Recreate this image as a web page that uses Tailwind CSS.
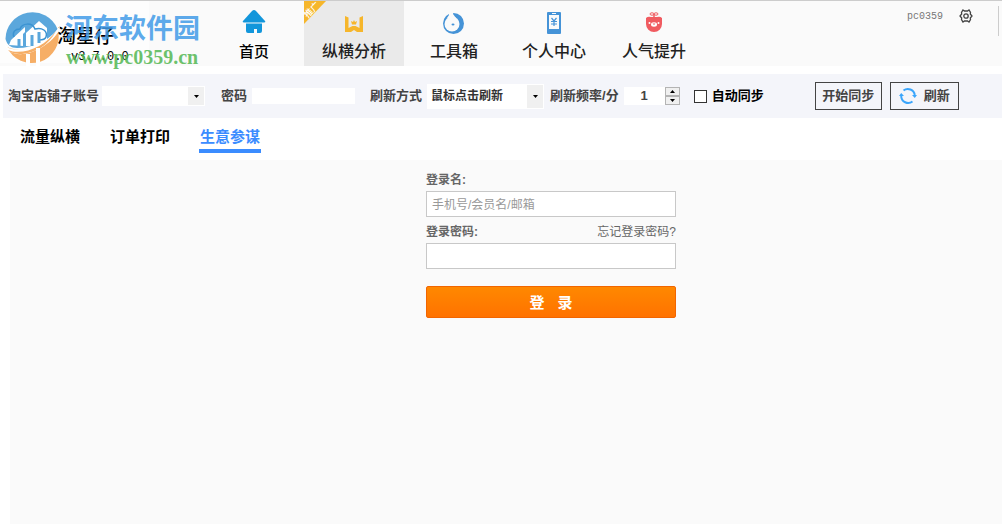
<!DOCTYPE html>
<html lang="zh-CN">
<head>
<meta charset="utf-8">
<meta name="viewport" content="width=device-width, initial-scale=1">
<title>淘星仔</title>
<script src="https://cdn.jsdelivr.net/npm/@tailwindcss/browser@4"></script>
</head>
<body class="flex min-h-screen flex-col bg-white font-['Liberation_Sans','Noto_Sans_CJK_SC',sans-serif] text-[#444]">
<header class="flex h-[66px] shrink-0 border-t border-[#ccc] bg-[#fafafa]">
  <div class="relative w-[204px] shrink-0">
    <div class="h-[62px] w-[149px] bg-[#fdfdfd]"></div>
    <h1 class="absolute top-6 left-[57px] text-[19px] leading-6 font-medium text-black">淘星仔</h1>
    <p class="absolute top-12 left-[71px] font-['Liberation_Mono',monospace] text-xs leading-4 text-black">v3.7.0.0</p>
    <svg class="absolute top-[8px] left-[4px]" width="58" height="58" viewBox="0 0 58 58" aria-hidden="true">
      <path d="M1.500 30a27 27 0 0 1 52-10C46 31 30 39 13 39 7 39 3 36 1.500 30Z" fill="#5ba7dc"/>
      <path d="M3 38c8 4 22 4 33-2 10-5 16-10 18-15a27 27 0 0 1-51 17Z" fill="#f6ae66"/>
      <path d="M5 36 7 31 21 18v5l-2 2v12Z" fill="#fff"/>
      <path d="M22 37V24l13-12 8 7v13c-6 4-14 6-21 5Z" fill="#fff"/>
      <path d="M10 28c-2-5 1-8 6-8 2-6 12-7 15 0 7-2 13 2 11 8-1 3-4 3-7 3" fill="none" stroke="#3b93d2" stroke-width="1.500"/>
      <path d="M15 30v7M28 26v11M35 23v11" fill="none" stroke="#5ba7dc" stroke-width="3"/>
      <path d="M0 34c3 6 9 7 16 6 16-1 32-10 40-23 0 10-20 26-36 28C9 46 2 42 0 34Z" fill="#fff"/>
      <path d="M4 41c14 6 37-3 48-19-7 14-21 22-34 23-7 0-11-1-14-4Z" fill="#f6ae66"/>
      <path d="M22 45h4v12h-4zM32 39h4v18h-4z" fill="#fff"/>
    </svg>
    <p class="absolute top-[10px] left-[65px] font-['Noto_Sans_CJK_SC',sans-serif] text-[27px] leading-8 font-bold whitespace-nowrap text-[#419be8]/85">河东软件园</p>
    <p class="absolute top-[44px] left-[66px] font-['Liberation_Serif',serif] text-xl leading-6 font-bold text-[#52b752]/85">www.pc0359.cn</p>
  </div>
  <nav class="flex text-center text-base leading-6 font-medium text-[#222]">
    <a href="#" class="flex w-[100px] flex-col items-center gap-1 pt-[9px] text-black">
      <svg width="26" height="26" viewBox="0 0 26 26" fill="#1296db" aria-hidden="true"><path d="M2 11 11 1q2-2 4 0l9 10q1 1.500-1 1.500H3q-2 0-1-1.500Z"/><path d="M5 13.500h16V21q0 2-2 2h-3v-4h-3v4H7q-2 0-2-2Z"/></svg>
      <span class="text-[15px]">首页</span>
    </a>
    <a href="#" class="relative flex w-[100px] flex-col items-center gap-1 bg-[#eaeaea] pt-[9px]">
      <svg class="absolute top-0 left-0" width="23" height="23" viewBox="0 0 23 23" aria-hidden="true"><path d="M0 0h22L0 23Z" fill="#f6b62b"/></svg>
      <span class="absolute top-[3px] -left-px -rotate-45 text-[9px] leading-3 whitespace-nowrap text-white">推广</span>
      <svg width="26" height="26" viewBox="0 0 26 26" aria-hidden="true"><path d="m4 6 3.500 1.500V18l4-2h3l4 2V7.500L22 6v16h-6l-3-2-3 2H4Z" fill="#f6b62b"/><path d="m10 11 2 1 1-2 1 2 2-1-1 3.500h-4Z" fill="#f6b62b"/></svg>
      <span>纵横分析</span>
    </a>
    <a href="#" class="flex w-[100px] flex-col items-center gap-1 pt-[9px]">
      <svg width="26" height="26" viewBox="0 0 26 26" aria-hidden="true"><circle cx="12.500" cy="13.500" r="10.500" fill="#4593d7"/><circle cx="11" cy="14" r="7.500" fill="#fafafa"/><path d="M8 0h5l-1 4 3 4-4 3-5-3 2-3Z" fill="#fafafa"/><ellipse cx="12" cy="14.500" rx="1.500" ry="1" fill="#4593d7"/></svg>
      <span>工具箱</span>
    </a>
    <a href="#" class="flex w-[100px] flex-col items-center gap-1 pt-[9px]">
      <svg width="26" height="26" viewBox="0 0 26 26" aria-hidden="true"><rect x="6" y="2" width="14" height="22" rx="1" fill="#4593d7"/><path d="M8 5h10v14H8z" fill="#fafafa"/><path d="M11 3.500h4" stroke="#fafafa"/><path d="m10.500 8 2.500 3 2.500-3M10 11.500h6M10 14h6M13 11v5" fill="none" stroke="#4593d7" stroke-width="1.200"/></svg>
      <span>个人中心</span>
    </a>
    <a href="#" class="flex w-[100px] flex-col items-center gap-1 pt-[9px]">
      <svg width="26" height="26" viewBox="0 0 26 26" aria-hidden="true"><path d="M5 8q2-2 5-1h6q3-1 5 1v6a8 8 0 0 1-16 0Z" fill="#f05b60"/><path d="M13 7V4" stroke="#f05b60" stroke-width="1.500"/><ellipse cx="11" cy="4" rx="2" ry="1.200" fill="none" stroke="#f05b60"/><ellipse cx="15" cy="4" rx="2" ry="1.200" fill="none" stroke="#f05b60"/><ellipse cx="13" cy="14.500" rx="3" ry="2.200" fill="#fff"/><circle cx="8.500" cy="13" r="1" fill="#fff"/><circle cx="17.500" cy="13" r="1" fill="#fff"/><path d="M11.500 13.500h3L13 15Z" fill="#f05b60"/></svg>
      <span>人气提升</span>
    </a>
  </nav>
  <div class="ml-auto flex items-start pt-[5px] pr-[3px]">
    <span class="mr-4 pt-[3px] font-['Liberation_Mono',monospace] text-[10px] leading-4 text-[#777]">pc0359</span>
    <button type="button" aria-label="设置" class="mt-[3px] mr-[25px]">
      <svg width="14" height="14" viewBox="0 0 14 14" fill="none" stroke="#444" stroke-width="1.300" aria-hidden="true"><path d="m4 1 1.500 1h3L10 1l1.500 2.500-.2 1.500L13 7l-1.700 2 .2 1.500L10 13l-1.500-1h-3L4 13l-1.500-2.500.2-1.500L1 7l1.700-2-.2-1.500Z"/><circle cx="7" cy="7" r="2.200"/></svg>
    </button>
    <span class="h-[30px] w-px bg-[#ccc]"></span>
  </div>
</header>

<form class="mt-2 ml-[3px] flex h-11 shrink-0 items-center bg-[#f4f5fa] pl-[5px] text-[13px] leading-5 font-bold whitespace-nowrap">
  <label for="account" class="mr-[3px]">淘宝店铺子账号</label>
  <div class="relative">
    <select id="account" class="block h-5 w-[103px] appearance-none bg-white"><option></option></select>
    <span class="pointer-events-none absolute top-px right-px flex h-[18px] w-4 items-center justify-center bg-[#f0f0f0]"><svg width="5" height="3" viewBox="0 0 5 3"><path d="M0 0h5L2.500 3Z"/></svg></span>
  </div>
  <label for="pwd" class="mr-[5px] ml-4">密码</label>
  <input id="pwd" type="password" class="h-4 w-[103px] bg-white">
  <label for="mode" class="mr-[5px] ml-[15px]">刷新方式</label>
  <div class="relative">
    <select id="mode" class="block h-[25px] w-[117px] appearance-none bg-white pl-1 text-xs text-[#333]"><option>鼠标点击刷新</option></select>
    <span class="pointer-events-none absolute top-px right-px flex h-[23px] w-4 items-center justify-center bg-[#f0f0f0]"><svg width="5" height="3" viewBox="0 0 5 3"><path d="M0 0h5L2.500 3Z"/></svg></span>
  </div>
  <label for="rate" class="mr-[5px] ml-[6px]">刷新频率/分</label>
  <div class="flex h-[18px] bg-white">
    <input id="rate" type="text" inputmode="numeric" value="1" class="w-[41px] text-center text-[13px] text-[#444]">
    <span class="flex w-[15px] flex-col">
      <button type="button" aria-label="增加" class="flex h-[9px] items-center justify-center border border-[#b4b4b4] bg-[#f0f0f0]"><svg width="5" height="3" viewBox="0 0 5 3"><path d="M0 3h5L2.500 0Z"/></svg></button>
      <button type="button" aria-label="减少" class="flex h-[9px] items-center justify-center border border-[#b4b4b4] bg-[#f0f0f0]"><svg width="5" height="3" viewBox="0 0 5 3"><path d="M0 0h5L2.500 3Z"/></svg></button>
    </span>
  </div>
  <label class="ml-[14px] flex items-center gap-[5px] text-black"><input type="checkbox" class="h-[13px] w-[13px] appearance-none border border-[#333] bg-white checked:bg-[#333]">自动同步</label>
  <button type="button" class="ml-[51px] h-7 w-[67px] border border-[#444]">开始同步</button>
  <button type="button" class="ml-2 flex h-7 w-[69px] items-center justify-between border border-[#444] px-2">
    <svg width="18" height="18" viewBox="0 0 18 18" fill="none" stroke="#3aa5fb" stroke-width="2" aria-hidden="true"><path d="M4.500 3.500A7 7 0 0 1 15.800 8M13.500 14.500A7 7 0 0 1 2.200 9"/><path d="M0 9l2.200-3L5 9ZM13 8h5l-2.200 3Z" fill="#3aa5fb" stroke="none"/></svg>
    刷新
  </button>
</form>

<nav class="flex h-[42px] shrink-0 gap-7 pl-[19px] text-[15px] leading-6 font-bold text-black">
  <a href="#" class="mt-[7px] h-7 px-px">流量纵横</a>
  <a href="#" class="mt-[7px] h-7 px-px">订单打印</a>
  <a href="#" class="mt-[7px] h-7 border-b-4 border-[#3b8cff] px-px text-[#3b8cff]">生意参谋</a>
</nav>

<main class="ml-[10px] flex flex-1 justify-center bg-[#fafafa] pt-[10px] pl-[90px] text-xs leading-5 text-[#666]">
  <form class="w-[250px]">
    <label for="login" class="block font-bold">登录名:</label>
    <input id="login" type="text" placeholder="手机号/会员名/邮箱" class="mt-px block h-[26px] w-full border border-[#c8c8c8] bg-white px-[5px] pt-[2px] placeholder:text-[#999]">
    <div class="mt-[5px] flex justify-between">
      <label for="login-pwd" class="font-bold">登录密码:</label>
      <a href="#">忘记登录密码?</a>
    </div>
    <input id="login-pwd" type="password" class="mt-px block h-[26px] w-full border border-[#c8c8c8] bg-white px-[5px]">
    <button type="submit" class="mt-[17px] flex h-8 w-full items-center justify-center gap-[13px] rounded-xs border border-[#f26500] bg-linear-to-b from-[#ff8800] to-[#ff7200] pt-[2px] text-[15px] font-bold text-white"><span>登</span><span>录</span></button>
  </form>
</main>
</body>
</html>
